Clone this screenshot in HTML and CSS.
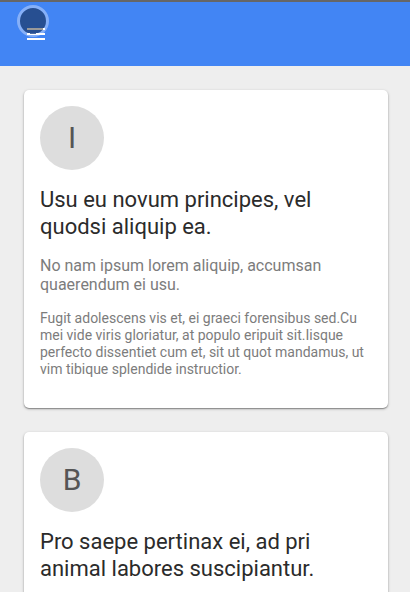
FILE: index.html
```html
<!DOCTYPE html>
<html lang="en">
<head>
<meta charset="utf-8">
<title>Cards</title>
<link rel="stylesheet" href="styles.css">
</head>
<body>
<header class="toolbar">
  <span class="touch"></span>
  <button class="menu" aria-label="Menu"><svg width="24" height="24" viewBox="0 0 24 24"><path fill="#fff" d="M3 18h18v-2H3zM3 13h18v-2H3z"/><path fill="#999" d="M3 6h16v2H3z"/><path fill="#fff" d="M19 6h2v2h-2z"/><path fill="#4f6fa5" d="M6 11h6v1H6z"/></svg></button>
</header>
<main class="cards">
  <article class="card">
    <div class="avatar">I</div>
    <h2>Usu eu novum principes, vel<br>quodsi aliquip ea.</h2>
    <h3>No nam ipsum lorem aliquip, accumsan<br>quaerendum ei usu.</h3>
    <p>Fugit adolescens vis et, ei graeci forensibus sed.Cu<br>mei vide viris gloriatur, at populo eripuit sit.Iisque<br>perfecto dissentiet cum et, sit ut quot mandamus, ut<br>vim tibique splendide instructior.</p>
  </article>
  <article class="card">
    <div class="avatar">B</div>
    <h2>Pro saepe pertinax ei, ad pri<br>animal labores suscipiantur.</h2>
  </article>
</main>
</body>
</html>
```
FILE: styles.css
```css
* { box-sizing: border-box; }
body { margin: 0; height: 592px; overflow: hidden; background: #eee; font-family: Roboto, sans-serif; }
.toolbar { position: relative; height: 66px; padding: 20px 24px; background: #4285f4; border-top: 2px solid #666; }
.menu { position: relative; display: block; width: 24px; height: 24px; padding: 0; border: 0; background: none; }
.menu svg { display: block; }
.touch { position: absolute; left: 17px; top: 3px; width: 32px; height: 32px; border: 3px solid #86b0f8; border-radius: 50%; background: #274f91; }
.cards { display: flex; flex-direction: column; gap: 24px; height: 526px; overflow: hidden; padding: 24px 22px 0 24px; }
.card { height: 318px; flex: none; padding: 16px; background: #fff; border-radius: 5px; box-shadow: 0 1px 1px rgba(0,0,0,.28), 0 1px 3px rgba(0,0,0,.28); white-space: nowrap; }
.avatar { display: flex; align-items: center; justify-content: center; width: 64px; height: 64px; padding-bottom: 2px; border-radius: 50%; background: #ddd; color: #555; font-size: 30px; }
h2 { margin: 16px 0 0; font-size: 22px; line-height: 27px; font-weight: 400; color: #2b2b2b; }
h3 { margin: 16px 0 0; font-size: 16px; line-height: 19px; font-weight: 400; color: #7c7c7c; }
p { margin: 16px 0 0; font-size: 14px; line-height: 17px; color: #7c7c7c; }
```
